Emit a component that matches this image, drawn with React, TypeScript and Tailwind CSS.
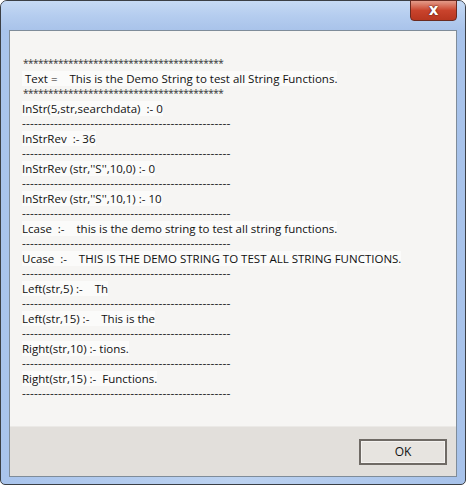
import React from "react";

const DASHES = "-".repeat(52);
const STARS = "*".repeat(40);

type Row = { kind: "text" | "dash" | "star"; text?: string };

const rows: Row[] = [
  { kind: "star" },
  { kind: "text", text: " Text =    This is the Demo String to test all String Functions." },
  { kind: "star" },
  { kind: "text", text: "InStr(5,str,searchdata)  :- 0" },
  { kind: "dash" },
  { kind: "text", text: "InStrRev  :- 36" },
  { kind: "dash" },
  { kind: "text", text: "InStrRev (str,''S'',10,0) :- 0" },
  { kind: "dash" },
  { kind: "text", text: "InStrRev (str,''S'',10,1) :- 10" },
  { kind: "dash" },
  { kind: "text", text: "Lcase  :-    this is the demo string to test all string functions." },
  { kind: "dash" },
  { kind: "text", text: "Ucase  :-    THIS IS THE DEMO STRING TO TEST ALL STRING FUNCTIONS." },
  { kind: "dash" },
  { kind: "text", text: "Left(str,5) :-    Th" },
  { kind: "dash" },
  { kind: "text", text: "Left(str,15) :-    This is the" },
  { kind: "dash" },
  { kind: "text", text: "Right(str,10) :- tions." },
  { kind: "dash" },
  { kind: "text", text: "Right(str,15) :-  Functions." },
  { kind: "dash" },
];

function Line({ row }: { row: Row }) {
  if (row.kind === "dash") {
    return (
      <div className="h-[15px] leading-[15px] whitespace-nowrap text-[12px] tracking-[0.15px] text-[#333]">
        {DASHES}
      </div>
    );
  }
  if (row.kind === "star") {
    return (
      <div className="h-[15px] leading-[15px] whitespace-nowrap text-[10px] tracking-[-0.5px] text-[#333] pl-[1px]">
        {STARS}
      </div>
    );
  }
  return (
    <div className="h-[15px] leading-[15px] whitespace-pre">
      <span className="bg-[#fbfbfa]">{row.text}</span>
    </div>
  );
}

export default function App() {
  return (
    <div
      className="w-[466px] h-[485px] bg-white"
      style={{ fontFamily: '"Open Sans", "Noto Sans", "Liberation Sans", sans-serif' }}
    >
      <div className="relative w-[466px] h-[485px] rounded-t-[7px] rounded-b-[5px] border border-[#3b3f45] bg-gradient-to-r from-[#a9c4ec] via-[#bcd2f0] to-[#a7c2ea] flex flex-col">
        {/* title bar */}
        <div className="h-[29px] shrink-0 bg-gradient-to-b from-[#c6daf4] via-[#b5cdef] to-[#a9c3ea] rounded-t-[6px]" />

        {/* close button */}
        <div className="absolute right-[8px] top-[-1px] w-[47px] h-[21px] rounded-b-[4px] border border-[#6b2a20] bg-gradient-to-b from-[#e39a89] via-[#c9432c] to-[#b8361f] flex items-center justify-center">
          <span
            className="text-white text-[15px] font-bold leading-none"
            style={{ fontFamily: '"DejaVu Sans", sans-serif', textShadow: "0 0 2px #5a1a10, 0 0 1px #5a1a10" }}
          >
            x
          </span>
        </div>

        {/* client area */}
        <div className="mx-[8px] flex-1 border border-[#7f8c99] flex flex-col min-h-0">
          <div className="flex-1 bg-[#f6f5f3] pt-[25px] pl-[12px] text-[11.5px] text-[#111]">
            {rows.map((r, i) => (
              <Line key={i} row={r} />
            ))}
          </div>
          <div className="h-[50px] shrink-0 bg-[#e2dfdb] border-t border-[#ebe9e6] flex items-start justify-end pr-[9px] pt-[12px]">
            <button className="w-[88px] h-[26px] border-2 border-[#6f6a65] bg-[#e7e4e0] text-[12px] text-[#111] flex items-center justify-center shadow-[inset_0_0_0_1px_#f4f2f0]">
              OK
            </button>
          </div>
        </div>
        <div className="h-[7px] shrink-0" />
      </div>
    </div>
  );
}
